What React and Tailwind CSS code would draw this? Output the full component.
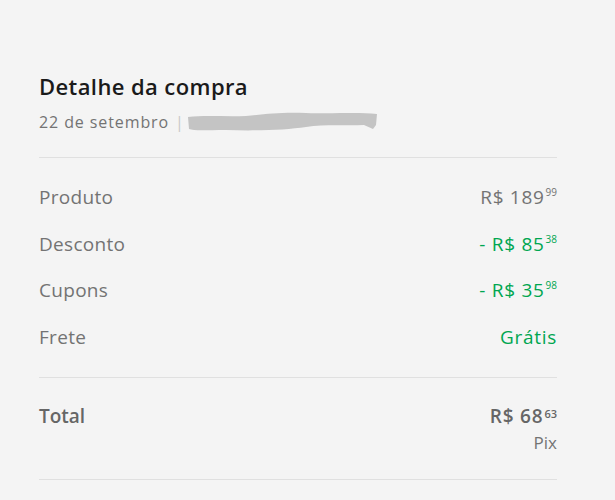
import React from 'react';

const rows = [
    { label: 'Produto', value: 'R$ 189', cents: '99', green: false },
    { label: 'Desconto', value: '- R$ 85', cents: '38', green: true },
    { label: 'Cupons', value: '- R$ 35', cents: '98', green: true },
    { label: 'Frete', value: 'Grátis', cents: null, green: true },
];

const Price = ({ value, cents, small = 'text-[10px]' }) => (
    <span className="inline-flex items-start">
        <span>{value}</span>
        {cents && <span className={`${small} leading-none ml-[1px] mt-[4px] tracking-normal`}>{cents}</span>}
    </span>
);

export default function App() {
    return (
        <div className="min-h-[500px] w-[615px] bg-[#f4f4f4] font-['Open_Sans',sans-serif]">
            <div className="w-[518px] ml-[39px] pt-[72px]">
                {/* Header */}
                <div className="pb-[24px] border-b border-[#e0e0e0]">
                    <h1 className="text-[22px] leading-[28px] font-semibold tracking-[0.4px] text-[#1a1a1a]">Detalhe da compra</h1>
                    <div className="flex items-center mt-[11px] text-[16px] leading-[20px] tracking-[0.9px] text-[#737373]">
                        <span>22 de setembro</span>
                        <span className="ml-[6px] text-[#c8c8c8]">|</span>
                        <svg width="192" height="22" viewBox="0 0 192 22" className="ml-[1px]">
                            <path d="M2 6 C20 4 40 6 60 5 C80 3 95 1 120 2 C150 3 170 1 191 3 L190 14 L187 18 L178 14 C160 15 140 13 120 16 C100 19 70 20 40 19 C20 19 8 20 3 18 Z" fill="#c4c4c4" />
                        </svg>
                    </div>
                </div>

                {/* Rows */}
                <div className="pt-[16px] pb-[17px] border-b border-[#e0e0e0]">
                    {rows.map(r => (
                        <div key={r.label} className="flex items-center justify-between h-[46.5px] text-[19px]">
                            <span className="text-[#737373] tracking-[0.3px]">{r.label}</span>
                            <span className={`tracking-[0.7px] ${r.green ? 'text-[#00a650]' : 'text-[#737373]'}`}>
                                <Price value={r.value} cents={r.cents} />
                            </span>
                        </div>
                    ))}
                </div>

                {/* Total */}
                <div className="flex justify-between pt-[26px] pb-[26px] border-b border-[#e0e0e0]">
                    <span className="text-[19px] leading-[24px] font-semibold text-[#666666]">Total</span>
                    <div className="flex flex-col items-end">
                        <span className="text-[19px] leading-[24px] text-[#666666] font-semibold tracking-[0.8px]">
                            <Price value="R$ 68" cents="63" small="text-[11px]" />
                        </span>
                        <span className="text-[17px] leading-[20px] text-[#737373] mt-[5px]">Pix</span>
                    </div>
                </div>
            </div>
        </div>
    );
}
